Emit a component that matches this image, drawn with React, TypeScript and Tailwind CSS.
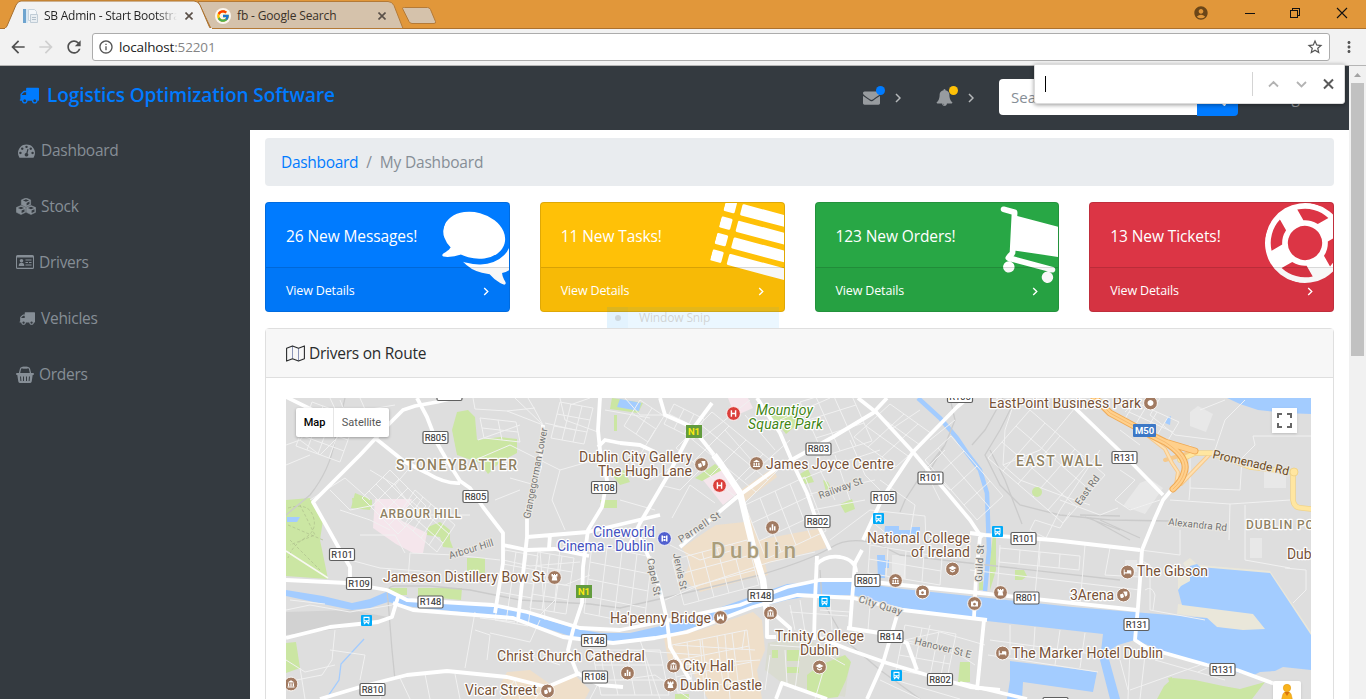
import React from "react";
import { FaSignOutAlt, FaSearch } from "react-icons/fa";
import { MdAccountCircle, MdStarBorder, MdMoreVert, MdArrowBack, MdArrowForward, MdRefresh, MdInfoOutline } from "react-icons/md";
import { FcGoogle } from "react-icons/fc";

const glyphs = {
  truck:
    "M640 1408q0-52-38-90t-90-38-90 38-38 90 38 90 90 38 90-38 38-90zm-384-512h384v-256h-158q-13 0-22 9l-195 195q-9 9-9 22v30zm1280 512q0-52-38-90t-90-38-90 38-38 90 38 90 90 38 90-38 38-90zm256-1088v1024q0 15-4 26.5t-13.5 18.5-16.5 11.5-23.5 6-22.5 2-25.5 0-22.5-.5q0 106-75 181t-181 75-181-75-75-181h-384q0 106-75 181t-181 75-181-75-75-181h-64q-3 0-22.5.5t-25.5 0-22.5-2-23.5-6-16.5-11.5-13.5-18.5-4-26.5q0-26 19-45t45-19v-320q0-8-.5-35t0-38 2.5-34.5 6.5-37 14-30.5 22.5-30l198-198q19-19 50.5-32t58.5-13h160v-192q0-26 19-45t45-19h1024q26 0 45 19t19 45z",
  comments:
    "M1408 768q0 139-94 257t-256.5 186.5-353.5 68.5q-86 0-176-16-124 88-278 128-36 9-86 16h-3q-11 0-20.5-8t-11.5-21q-1-3-1-6.5t.5-6.5 2-6l2.5-5 3.5-5.5 4-5 4.5-5 4-4.5q5-6 23-25t26-29.5 22.5-29 25-38.5 20.5-44q-124-72-195-177t-71-224q0-139 94-257t256.5-186.5 353.5-68.5 353.5 68.5 256.5 186.5 94 257zm384 256q0 120-71 224.5t-195 176.5q10 24 20.5 44t25 38.5 22.5 29 26 29.5 23 25q1 1 4 4.5t4.5 5 4 5 3.5 5.5l2.5 5 2 6 .5 6.5-1 6.5q-3 14-13 22t-22 7q-50-7-86-16-154-40-278-128-90 16-176 16-271 0-472-132 58 4 88 4 161 0 309-45t264-129q125-92 192-212t67-254q0-77-23-152 129 71 204 178t75 230z",
  list:
    "M32 128h192q32 0 32 32v192q0 32-32 32h-192q-32 0-32-32v-192q0-32 32-32zM416 128h1344q32 0 32 32v192q0 32-32 32h-1344q-32 0-32-32v-192q0-32 32-32zM32 512h192q32 0 32 32v192q0 32-32 32h-192q-32 0-32-32v-192q0-32 32-32zM416 512h1344q32 0 32 32v192q0 32-32 32h-1344q-32 0-32-32v-192q0-32 32-32zM32 896h192q32 0 32 32v192q0 32-32 32h-192q-32 0-32-32v-192q0-32 32-32zM416 896h1344q32 0 32 32v192q0 32-32 32h-1344q-32 0-32-32v-192q0-32 32-32zM32 1280h192q32 0 32 32v192q0 32-32 32h-192q-32 0-32-32v-192q0-32 32-32zM416 1280h1344q32 0 32 32v192q0 32-32 32h-1344q-32 0-32-32v-192q0-32 32-32z",
  cart:
    "M704 1536q0 52-38 90t-90 38-90-38-38-90 38-90 90-38 90 38 38 90zm896 0q0 52-38 90t-90 38-90-38-38-90 38-90 90-38 90 38 38 90zm128-1088v512q0 24-16.5 42.5t-40.5 21.5l-1044 122q13 60 13 70 0 16-24 64h920q26 0 45 19t19 45-19 45-45 19h-1024q-26 0-45-19t-19-45q0-11 8-31.5t16-36 21.5-40 15.5-29.5l-177-823h-204q-26 0-45-19t-19-45 19-45 45-19h256q16 0 28.5 6.5t19.5 15.5 13 24.5 8 26 5.5 29.5 4.5 26h1201q26 0 45 19t19 45z",
  ring:
    "M896 0q182 0 348 71t286 191 191 286 71 348-71 348-191 286-286 191-348 71-348-71-286-191-191-286-71-348 71-348 191-286 286-191 348-71zm0 128q-190 0-361 90l194 194q82-28 167-28t167 28l194-194q-171-90-361-90zm-678 1129l194-194q-28-82-28-167t28-167l-194-194q-90 171-90 361t90 361zm678 407q190 0 361-90l-194-194q-82 28-167 28t-167-28l-194 194q171 90 361 90zm0-384q159 0 271.5-112.5t112.5-271.5-112.5-271.5-271.5-112.5-271.5 112.5-112.5 271.5 112.5 271.5 271.5 112.5zm484-217l194 194q90-171 90-361t-90-361l-194 194q28 82 28 167t-28 167z",
  bell:
    "M912 1696q0-16-16-16-59 0-101.5-42.5t-42.5-101.5q0-16-16-16t-16 16q0 73 51.5 124.5t124.5 51.5q16 0 16-16zm816-288q0 52-38 90t-90 38h-448q0 106-75 181t-181 75-181-75-75-181h-448q-52 0-90-38t-38-90q50-42 91-88t85-119.5 74.5-158.5 50-206 19.5-260q0-152 117-282.5t307-158.5q-8-19-8-39 0-40 28-68t68-28 68 28 28 68q0 20-8 39 190 28 307 158.5t117 282.5q0 139 19.5 260t50 206 74.5 158.5 85 119.5 91 88z",
  envelope:
    "M1792 710v794q0 66-47 113t-113 47h-1472q-66 0-113-47t-47-113v-794q44 49 101 87 362 246 497 345 57 42 92.5 65.5t94.5 48 110 24.5h2q51 0 110-24.5t94.5-48 92.5-65.5q170-123 498-345 57-39 100-87zm0-294q0 79-49 151t-122 123q-376 261-468 325-10 7-42.5 31t-54 38.5-52 32.5-57.5 27-50 9h-2q-23 0-50-9t-57.5-27-52-32.5-54-38.5-42.500-31q-91-64-262-182.500t-205-142.500q-62-42-117-115.500t-55-136.500q0-78 41.500-130t118.500-52h1472q65 0 112.500 47t47.500 113z",
  gauge:
    "M384 1152q0-53-37.5-90.5t-90.5-37.5-90.5 37.5-37.5 90.5 37.5 90.5 90.5 37.5 90.5-37.5 37.5-90.5zm192-448q0-53-37.5-90.5t-90.5-37.5-90.5 37.5-37.5 90.5 37.5 90.5 90.5 37.5 90.5-37.5 37.5-90.5zm428 481l101-382q6-26-7.5-48.5t-38.5-29.5-48 6.5-30 39.5l-101 382q-60 5-107 43.5t-63 98.5q-20 77 20 146t117 89 146-20 89-117q16-60-6-117t-72-91zm660-33q0-53-37.5-90.5t-90.5-37.5-90.5 37.5-37.5 90.5 37.5 90.5 90.5 37.5 90.5-37.5 37.5-90.5zm-640-640q0-53-37.5-90.5t-90.5-37.5-90.5 37.5-37.5 90.5 37.5 90.5 90.5 37.5 90.5-37.5 37.5-90.5zm448 192q0-53-37.5-90.5t-90.5-37.5-90.5 37.5-37.5 90.5 37.5 90.5 90.5 37.5 90.5-37.5 37.5-90.5zm320 448q0 261-141 483-19 29-54 29h-1402q-35 0-54-29-141-221-141-483 0-182 71-348t191-286 286-191 348-71 348 71 286 191 191 286 71 348z",
};

function Glyph({ name, className }: { name: keyof typeof glyphs; className: string }) {
  return (
    <svg viewBox="0 0 1792 1792" fill="currentColor" className={className}>
      <path d={glyphs[name]} />
    </svg>
  );
}

function Chevron({ className, d = "M1 1l4 4-4 4" }: { className: string; d?: string }) {
  return (
    <svg viewBox="0 0 6 10" fill="none" stroke="currentColor" strokeWidth="1.5" className={className}>
      <path d={d} />
    </svg>
  );
}

function IdCard({ className }: { className: string }) {
  return (
    <svg viewBox="0 0 18 14" className={className} fill="currentColor">
      <path fillRule="evenodd" d="M1.5 0h15Q18 0 18 1.5v11Q18 14 16.500 14h-15Q0 14 0 12.500v-11Q0 0 1.500 0zM1 2.500v10.200h16V2.500z" />
      <circle cx="5.500" cy="5.800" r="1.800" />
      <path d="M2.700 11q0-3.200 2.800-3.200T8.300 11zM9.500 4.600h6v1h-6zM9.500 7h2.500v1H9.500zM13 7h2.500v1H13zM9.500 9.400h6v1h-6z" />
    </svg>
  );
}

function Cubes({ className }: { className: string }) {
  const cube = "M0-4.200L4.600-2.300V2.500L0 4.700-4.600 2.500V-2.300z";
  const face = "M0-3L3.100-1.800 0-.5-3.100-1.800zM.6.700L3.500-.6V1.900L.6 3.300z";
  const spots: [number, number][] = [[10, 4.200], [5, 11.800], [15, 11.800]];
  return (
    <svg viewBox="0 0 20 17" className={className}>
      {spots.map(([x, y]) => (
        <g key={x} transform={`translate(${x} ${y})`}>
          <path d={cube} fill="currentColor" stroke="currentColor" strokeWidth=".6" strokeLinejoin="round" />
          <path d={face} fill="#343a40" />
        </g>
      ))}
    </svg>
  );
}

function Basket({ className }: { className: string }) {
  return (
    <svg viewBox="0 0 18 17" className={className}>
      <path d="M3.300 8L4.500 2.900Q4.800 1.700 6 1.700h6q1.200 0 1.500 1.200L14.700 8" fill="none" stroke="currentColor" strokeWidth="1.200" />
      <path d="M6.500.6h5v2h-5z" fill="currentColor" />
      <path
        fillRule="evenodd"
        d="M1 7h16q1 0 1 1t-1 1h-.3l-1 6.600q-.2 1.400-1.500 1.400H3.800q-1.300 0-1.500-1.400L1.300 9H1Q0 9 0 8t1-1zM4 10.500l.4 4.500h1l-.4-4.500zM7 10.500V15h1v-4.500zM10 10.500V15h1v-4.500zM13 10.500l-.4 4.500h1l.4-4.500z"
        fill="currentColor"
      />
    </svg>
  );
}

function FoldedMap({ className }: { className: string }) {
  return (
    <svg viewBox="0 0 19 17" className={className} fill="none" strokeLinejoin="round">
      <path d="M6.500 1v12.500M12.500 3.300v12.500" stroke="#8b95b8" strokeWidth="1" />
      <path d="M.6 3.300L6.500.9l6 2.400L18.400.9v12.800l-5.900 2.400-6-2.400-5.900 2.400z" stroke="#292b2c" strokeWidth="1.100" />
    </svg>
  );
}

/* ---------- browser chrome ---------- */

function TabClose() {
  return (
    <svg viewBox="0 0 8 8" className="h-2 w-2 shrink-0" stroke="#5a5048" strokeWidth="1.6">
      <path d="M.5.5l7 7M7.500.5l-7 7" />
    </svg>
  );
}

function TabStrip() {
  return (
    <div className="relative flex h-[29px] shrink-0 bg-[#e1973a]">
      <svg viewBox="0 0 1366 29" className="absolute inset-0 h-[29px] w-[1366px]">
        <path d="M0 28.500H1366" stroke="#ac712d" />
        <path d="M402.500 8q.5-.5 2-.500h23q2 0 3 2l5 12q.5 2-1.500 2h-22q-2 0-3-2l-6.500-13z" fill="#d5c2ab" stroke="#b47a37" />
        <path d="M198 1.500h190q4 0 6 4l9 23H211z" fill="#d5c2ab" stroke="#b47a37" />
        <path d="M4 29q2-1 3-3l9-21q2-4 5-4h173q4 0 6 4l9 21q1 3 3 3z" fill="#f2f2f2" stroke="#a8702f" />
        <path d="M5 28.600h207" stroke="#f2f2f2" strokeWidth="1.400" />
      </svg>
      <div className="relative flex w-[207px] items-center pr-[14px] pl-[23px] pt-[2px]">
        <svg viewBox="0 0 16 16" className="h-4 w-4 shrink-0">
          <path d="M0 1h3v14H0z" fill="#6ea4cf" />
          <path d="M3 1h2v14H3z" fill="#d9e8f3" />
          <path d="M5.500 1.500h6l2 2v9h-8z" fill="#f4f7fa" stroke="#c9d4dd" />
          <path d="M7.500 6.500h7v8h-7z" fill="#e9eef2" stroke="#c0ccd6" />
          <path d="M9 9.500h4M9 11.500h4" stroke="#b4c1cc" />
        </svg>
        <span className="ml-[5px] w-[133px] overflow-hidden bg-gradient-to-r from-[#222] from-85% to-transparent bg-clip-text font-['Open_Sans',sans-serif] text-[12px] tracking-[-0.25px] whitespace-nowrap text-transparent">
          SB Admin - Start Bootstrap
        </span>
        <span className="ml-auto"><TabClose /></span>
      </div>
      <div className="relative flex w-[193px] items-center pt-[2px] pr-[14px] pl-[8px]">
        <span className="flex h-4 w-4 items-center justify-center rounded-full bg-[#fbf6ef]">
          <FcGoogle className="h-[14px] w-[14px]" />
        </span>
        <span className="ml-[6px] font-['Open_Sans',sans-serif] text-[12px] tracking-[-0.150px] whitespace-nowrap text-[#3a3128]">fb - Google Search</span>
        <span className="ml-auto"><TabClose /></span>
      </div>
      <div className="relative ml-auto flex h-[26px] items-center pr-[18px]">
        <MdAccountCircle className="mr-[35px] h-4 w-4 text-[#6b4618]" />
        <svg viewBox="0 0 104 12" className="h-3 w-[104px]" fill="none" stroke="#111" shapeRendering="crispEdges">
          <path d="M1 6.500h10" />
          <path d="M46.500 3.500h7v7h-7zM48.500 3v-1.500h7v7H54" />
          <path d="M93 1l10 10M103 1L93 11" shapeRendering="auto" strokeWidth="1.100" />
        </svg>
      </div>
    </div>
  );
}

function Toolbar() {
  return (
    <div className="flex h-[37px] shrink-0 items-center border-b border-[#b5b5b5] bg-[#f2f2f2] pl-2">
      <MdArrowBack className="h-5 w-5 text-[#505050]" />
      <MdArrowForward className="ml-[8px] h-5 w-5 text-[#cfcfcf]" />
      <MdRefresh className="ml-[8px] h-5 w-5 text-[#505050]" />
      <div className="ml-[8px] flex h-7 w-[1238px] items-center rounded-[3px] border border-[#acacac] bg-white px-[5px]">
        <MdInfoOutline className="h-4 w-4 text-[#555]" />
        <span className="ml-[5px] font-['Open_Sans',sans-serif] text-[13.5px] tracking-[-0.150px] text-[#222]">
          localhost<span className="text-[#858585]">:52201</span>
        </span>
        <MdStarBorder className="ml-auto h-[18px] w-[18px] text-[#555]" />
      </div>
      <MdMoreVert className="ml-[10px] h-[18px] w-[18px] text-[#555]" />
    </div>
  );
}

function FindBar() {
  return (
    <div className="absolute top-[64px] left-[1034px] flex h-[40px] w-[311px] items-center rounded-b-[3px] border border-[#dcdcdc] bg-white shadow-[0_1px_4px_rgba(0,0,0,0.4)]">
      <span className="-mt-px ml-[10px] h-4 w-px bg-black" />
      <span className="ml-auto h-6 w-px bg-[#d4d4d4]" />
      <svg viewBox="0 0 72 12" className="mr-[5px] ml-[14px] h-3 w-[72px]" fill="none" strokeWidth="1.800">
        <path d="M2 8.500l4.500-4.500L11 8.500M30 4l4.500 4.500L39 4" stroke="#b3b3b3" />
        <path d="M57 1.500l9 9M66 1.500l-9 9" stroke="#5a5a5a" strokeWidth="2" />
      </svg>
    </div>
  );
}

/* ---------- application ---------- */

function Navbar() {
  return (
    <header className="flex h-16 shrink-0 bg-[#343a40] font-['Open_Sans',sans-serif]">
      <div className="flex h-[58px] items-center pl-[19px] text-[#007bff]">
        <Glyph name="truck" className="h-5 w-5" />
        <span className="ml-2 text-[19px] font-semibold tracking-[-0.070px]">Logistics Optimization Software</span>
      </div>
      <div className="ml-auto flex h-[63px] items-center text-[#979b9f]">
        <span className="relative">
          <Glyph name="envelope" className="h-[17px] w-[17px]" />
          <span className="absolute -top-[3px] left-[13px] h-[9px] w-[9px] rounded-full bg-[#007bff]" />
        </span>
        <Chevron className="ml-[15px] h-[10px] w-[6px] text-[#b5b8ba]" />
        <span className="relative ml-[35px]">
          <Glyph name="bell" className="h-[17px] w-[17px]" />
          <span className="absolute -top-[3px] left-[13px] h-[9px] w-[9px] rounded-full bg-[#ffc107]" />
        </span>
        <Chevron className="ml-[15px] h-[10px] w-[6px] text-[#b5b8ba]" />
        <div className="ml-[25px] flex h-[37px]">
          <div className="flex h-[36px] w-[198px] items-center rounded-l bg-white pt-px pl-3 text-[15px] text-[#868e96]">Search for...</div>
          <div className="flex h-[37px] w-[41px] items-center justify-center rounded-r bg-[#007bff] text-white">
            <FaSearch className="h-4 w-4" />
          </div>
        </div>
        <div className="flex w-[111px] items-center pl-[22px] text-[15.500px]">
          <FaSignOutAlt className="h-3 w-3" />
          <span className="ml-[2px]">Logout</span>
        </div>
      </div>
    </header>
  );
}

function SideItem({ icon, label, className }: { icon: React.ReactNode; label: string; className: string }) {
  return (
    <div className={"flex h-14 items-center text-[15.500px] tracking-[-0.280px] text-[#868e96] " + className}>
      {icon}
      <span className="pt-[2px]">{label}</span>
    </div>
  );
}

function Sidebar() {
  return (
    <nav className="w-[250px] shrink-0 bg-[#343a40] font-['Open_Sans',sans-serif]">
      <div className="-mt-[8px]">
        <SideItem className="gap-[6px] pl-[18px]" label="Dashboard" icon={<Glyph name="gauge" className="h-[17px] w-[17px]" />} />
        <SideItem className="gap-[5px] pl-[16px]" label="Stock" icon={<Cubes className="h-[17px] w-5" />} />
        <SideItem className="gap-[5px] pl-[16px]" label="Drivers" icon={<IdCard className="h-[14px] w-[18px]" />} />
        <SideItem className="gap-[6px] pl-[19px]" label="Vehicles" icon={<Glyph name="truck" className="h-4 w-4" />} />
        <SideItem className="gap-[5px] pl-[16px]" label="Orders" icon={<Basket className="h-[17px] w-[18px]" />} />
      </div>
    </nav>
  );
}

function StatCard({ title, icon, className }: { title: string; icon: keyof typeof glyphs; className: string }) {
  return (
    <div className={"relative flex h-[110px] flex-col overflow-hidden rounded border border-black/[0.125] text-white " + className}>
      <Glyph name={icon} className="absolute top-0 right-[-12px] h-20 w-20 rotate-[15deg]" />
      <div className="flex h-[64px] items-center pt-[3px] pl-5 text-[15.500px] tracking-[-0.1px]">
        <span className="relative">{title}</span>
      </div>
      <div className="relative flex flex-1 items-center justify-between border-t border-black/[0.125] bg-black/[0.03] pt-[3px] pr-[20px] pl-5 text-[12.500px]">
        <span className="tracking-[-0.150px]">View Details</span>
        <Chevron className="h-[9px] w-[6px]" />
      </div>
    </div>
  );
}

/* ---------- map ---------- */

type Pt = [number, number];

function Lattice({ o, u, v, n, m, w = 1 }: { o: Pt; u: Pt; v: Pt; n: number; m: number; w?: number }) {
  let d = "";
  for (let i = 0; i <= n; i++) {
    d += `M${o[0] + u[0] * i} ${o[1] + u[1] * i}l${v[0] * m} ${v[1] * m}`;
  }
  for (let j = 0; j <= m; j++) {
    d += `M${o[0] + v[0] * j} ${o[1] + v[1] * j}l${u[0] * n} ${u[1] * n}`;
  }
  return <path d={d} strokeWidth={w} />;
}

const majorRoads = [
  "M417 398L427 417L437 443L448 462L460 481L470 488L483 507L503 533L503 563L495 613",
  "M454 398L437 402L415 406L403 410L390 423L360 455L313 502L340 550L350 567L350 580",
  "M286 397L327 417M375 438L405 462L427 473Q445 484 460 483",
  "M660 398L665 415L692 427L714 455",
  "M712 403L692 430L667 477L640 523L626 552",
  "M620 443L640 445L655 452M598 447L605 440L620 443",
  "M600 398L598 430L600 450L607 480L602 507L588 530L583 567L582 603L573 630L568 650L577 673L600 685L623 687",
  "M680 547L712 518L737 497L777 468L833 437L873 413L887 398",
  "M757 398L768 415L780 433L795 468L807 493L818 525L830 550",
  "M858 398L877 413L913 452L970 520L982 538",
  "M968 398L957 407L913 452L883 497L863 540",
  "M286 580L347 583L387 590L407 600L493 605L527 612L580 628L620 630L670 620L740 605L787 587L820 580L853 580L970 592L1137 610",
  "M393 603L413 610L513 618L563 637L613 643L655 638L687 632L753 607L797 595L853 598L903 610L987 620",
  "M398 597L392 617L378 622L330 627L286 638",
  "M320 699L360 687L407 675L447 671L507 677L547 687L580 673",
  "M817 556L815 600L814 640",
  "M862 550L855 563L852 600L850 628M816 565Q825 555 840 557Q856 560 856 572",
  "M1075 408L1127 458L1163 495",
  "M1173 488L1163 500L1155 518L1142 550L1140 580L1138 607L1135 640L1147 648L1207 665L1237 670L1275 684",
  "M985 535L1053 540L1140 550M970 533L985 535",
  "M980 537L976 577L974 617",
  "M984 620L977 690M960 683L1027 699",
  "M820 638L850 650L887 663L927 675L970 687L1000 690",
  "M898 612L883 663L867 699",
  "M767 612L767 637L776 637M773 613L790 628L790 632",
  "M847 628L880 633L907 643L917 670",
  "M776 699L782 683L827 699",
  "M503 545L527 550L555 549L589 556M527 537L588 532L660 515M550 535L549 548",
  "M543 425L540 467L527 510L527 537L518 620",
  "M640 538L650 560L660 590L667 620L670 647L690 680",
];

const minorRoads = [
  "M473 398L475 409L507 411L543 425L515 398M528 398L535 410L543 425M545 423L575 430M507 411L535 408",
  "M286 465L310 455M330 398L345 430L320 455L300 440M286 445L300 440L315 420M340 400L350 425M360 398L372 425M365 410L395 405",
  "M310 500L345 478L370 500M330 490L350 510L375 505M370 470L395 485L405 498L420 515L470 515M395 485L412 465",
  "M475 460L510 445L560 470L595 460M560 470L552 500L565 530M510 478L535 485M495 500L520 490M478 440L520 425M560 398L565 420L598 432M570 405L590 398",
  "M340 510L370 520L390 530M350 560L380 568L435 572M410 553L455 555L500 560M410 553L408 580M360 535L395 535L405 553",
  "M286 610L310 605L350 612L392 605M290 600L325 604",
  "M335 630L332 660L322 675L286 682M286 660L305 672L335 665M300 668L305 699M330 650L365 655L360 680",
  "M475 612L465 668M490 633L530 642L540 620M475 630L490 635L487 660M480 618L515 622",
  "M503 560L530 566L580 562M530 580L565 585L590 575M540 550L545 620M560 548L555 600L540 615",
  "M610 470L650 480L670 468M620 500L655 510M625 398L640 415L665 415M605 410L650 418M640 455L655 430",
  "M700 470L680 490L660 485M715 503L690 485L672 518M670 545L700 560L740 548M665 600L700 585L770 562L815 552",
  "M780 420L830 398M790 440L745 480M750 400L700 440M725 430L760 470M745 415L775 450M800 480L850 460L880 450M805 495L875 480M812 510L865 500M850 440L865 475L880 490",
  "M820 470L835 500M835 455L850 500M830 540L870 510L925 516L926 540M870 520L900 545",
  "M890 430L920 410M900 440L950 490M930 440L955 420M940 500L925 470L945 450M880 480L915 505L910 535",
  "M770 645L815 648L845 665M785 650L787 683M800 650L795 690M770 655L765 690M825 665L815 699",
  "M790 605L795 630M800 600L805 632M820 610L850 612M830 600L832 630M870 605L868 630M790 612L848 616",
  "M895 640L960 655L975 665M905 640L940 632L985 645M930 625L925 645M945 655L940 680M895 680L960 699M880 680L920 699",
  "M970 570L1140 590M1000 545L997 600M1040 540L1035 595M1085 545L1080 605M1110 548L1105 575L1140 577",
  "M1015 400L1005 430L1003 465L1020 480L1060 495L1090 505M1075 408L1040 450L1003 465M1100 450L1060 510L1045 540M1060 500L1100 515L1118 508",
  "M1035 520L1060 528L1070 512M1035 520L1030 530L1050 540M1120 470L1135 480L1115 500L1130 510L1160 500",
  "M1215 450L1225 420L1245 400M1190 445L1190 488L1240 490L1242 458L1255 445L1253 436L1311 436M1170 500L1230 504L1290 500M1230 504L1229 540M1190 488L1189 500",
  "M1120 430L1140 445M1140 398L1125 412M1160 398L1150 415L1175 435L1215 440M1200 410L1225 400",
  "M1140 560L1150 565L1150 610L1205 620M1145 590Q1152 585 1155 595L1153 610M1285 568L1306 570L1306 590L1293 603M1180 530L1180 555L1140 550M1245 505L1245 560L1290 568",
  "M990 640L1100 655M1010 625L1010 655M1035 627L1033 660M1060 630L1055 665M1085 633L1080 668M988 655L1098 672",
  "M1130 650L1128 699M1145 655L1140 699M1130 690L1200 665M1120 660L1128 690M1155 660L1225 680M1207 668L1198 672",
  "M630 650L700 655M640 640L660 699M620 680L655 675M675 645L755 650M700 640L705 699M725 635L730 699M745 630L742 650M600 650L605 680M590 699L600 680M680 665L760 660M655 675L690 699",
  "M500 699L515 680L520 699M410 699L400 678M380 699L385 684M430 699L425 674M460 699L455 674M545 687L535 699M560 665L530 655L500 655",
];

const railways = [
  "M286 515L310 495Q330 470 335 440L345 398",
  "M395 680L392 650L388 600Q385 586 395 586L430 586L470 590L520 600L590 604L620 608Q700 590 760 575Q810 560 830 548Q850 535 880 545L900 555L960 562L1120 580",
  "M820 570L822 600L845 640L880 670L920 699",
  "M1003 398L985 430L972 445M1015 400L1000 430L985 455L1000 485L1020 505L1060 515L1110 520L1170 521",
  "M990 450L1005 480L1022 524M1090 518L1130 540M1085 517L1120 530M1080 515L1120 516M1100 520L1140 538",
  "M950 398L955 420L945 445L918 480L905 500L900 512M945 445L930 470",
];

const parks = [
  "M286 500L310 498L323 520L320 540L328 579L286 576z",
  "M457 412L468 410L475 417L477 440L500 437L517 439L517 453L500 462L488 474L480 463L457 455L452 430z",
  "M355 493L372 500L370 510L351 508z",
  "M428 527L440 522L450 530L450 540L453 548L443 547L440 537L427 535z",
  "M467 558h18v15h-18zM387 588h20v7h-17zM418 588h44l-1 12-43-4z",
  "M286 643L296 642L300 668L286 673z",
  "M352 498L372 500L372 508L353 506z",
  "M612 398L643 403L638 413L610 409z",
  "M771 416L795 412L800 422L786 434L778 424z",
  "M695 478L715 464L722 470L702 481z",
  "M800 474L808 469L814 482L805 484zM823 480L828 482L833 492L826 492zM840 504L852 499L855 509L845 513z",
  "M807 675L820 665L845 655L851 662L846 680L838 697L820 699L807 690z",
  "M772 650h6v8h-6zM787 650h13v11h-13zM787 667h12v6h-12z",
  "M1157 699L1164 686L1173 678L1195 680L1223 686L1240 689L1265 682L1252 699z",
  "M1168 678L1172 677L1176 690L1172 692z",
  "M1015 570h9l3 6-5 4h-7zM979 560h4v30h-4zM993 535h3v35l-6 20v-30zM960 662h10v20h-12z",
  "M600 500h17v8h-15zM612 475l12-5 6 12-10 3zM675 694h14v5h-14zM614 415h3v16h-3z",
];

const peach = [
  "M738 492L773 468L777 477L744 502L752 522L758 540L822 528L826 548L765 564L768 575L752 578L700 592L683 580L690 562L682 548L708 530L716 525L745 522z",
  "M664 638L700 630L753 612L762 620L765 650L757 670L762 699L708 699L690 668L668 660z",
  "M507 672L530 670L550 684L575 675L590 690L585 699L505 699L500 685z",
];

function Shield({ x, y, label }: { x: number; y: number; label: string }) {
  const w = label.length > 3 ? 25 : 20;
  return (
    <g>
      <rect x={x - w / 2} y={y - 6} width={w} height={12} rx="1.500" fill="#fff" stroke="#5f5f5f" strokeWidth="1.200" />
      <text x={x} y={y + 3.400} textAnchor="middle" fontSize="9.300" fill="#333" stroke="#333" strokeWidth=".1">{label}</text>
    </g>
  );
}

const shields: [number, number, string][] = [
  [449.500, 394.500, "R101"], [435.500, 437.500, "R805"], [475.500, 496.500, "R805"], [604, 487.500, "R108"], [342, 554.500, "R101"], [359, 583.500, "R109"],
  [430.500, 602, "R148"], [594, 640.500, "R148"], [595, 677, "R108"], [372.500, 689.500, "R810"], [818.500, 449, "R803"], [930.500, 478, "R101"],
  [883.500, 497.500, "R105"], [817.500, 521.500, "R802"], [760.500, 595.500, "R148"], [867.500, 580.500, "R801"], [890.500, 636.500, "R814"], [940, 679.500, "R802"],
  [1124.500, 457.500, "R131"], [1023.500, 538.500, "R101"], [1026.500, 598, "R801"], [1136.500, 624.500, "R131"], [1222.500, 669.500, "R131"], [1055.500, 703.500, "R802"], [960, 396.500, "R105"],
];

type Tag = { x: number; y: number; w: number; t: string; s?: number; c?: string; r?: number; weight?: number; i?: boolean };

const tags: Tag[] = [
  { x: 396, y: 470, w: 121, t: "STONEYBATTER", s: 14, c: "#8f7f5f", weight: 500 },
  { x: 380, y: 518, w: 81, t: "ARBOUR HILL", s: 12, c: "#8f8163", weight: 500 },
  { x: 1016, y: 466, w: 86, t: "EAST WALL", s: 14, c: "#8f8163", weight: 500 },
  { x: 1246, y: 529, w: 84, t: "DUBLIN PORT", s: 12, c: "#8f8163", weight: 500 },
  { x: 711, y: 558, w: 85, t: "Dublin", s: 22, c: "#aa9d7b", weight: 500 },
  { x: 579, y: 462, w: 113, t: "Dublin City Gallery" },
  { x: 598, y: 476, w: 94, t: "The Hugh Lane" },
  { x: 766, y: 469, w: 128, t: "James Joyce Centre" },
  { x: 756, y: 415, w: 57, t: "Mountjoy", c: "#3f8614", i: true },
  { x: 748, y: 429, w: 75, t: "Square Park", c: "#3f8614", i: true },
  { x: 593, y: 537, w: 62, t: "Cineworld", c: "#4552c0" },
  { x: 557, y: 551, w: 97, t: "Cinema - Dublin", c: "#4552c0" },
  { x: 383, y: 582, w: 162, t: "Jameson Distillery Bow St" },
  { x: 610, y: 623, w: 101, t: "Ha'penny Bridge" },
  { x: 497, y: 661, w: 148, t: "Christ Church Cathedral" },
  { x: 465, y: 695, w: 72, t: "Vicar Street" },
  { x: 683, y: 671, w: 51, t: "City Hall" },
  { x: 680, y: 690, w: 82, t: "Dublin Castle" },
  { x: 775, y: 641, w: 89, t: "Trinity College" },
  { x: 800, y: 655, w: 39, t: "Dublin" },
  { x: 867, y: 543, w: 103, t: "National College" },
  { x: 911, y: 557, w: 59, t: "of Ireland" },
  { x: 989, y: 408, w: 152, t: "EastPoint Business Park" },
  { x: 1137, y: 576, w: 71, t: "The Gibson" },
  { x: 1070, y: 600, w: 44, t: "3Arena" },
  { x: 1012, y: 658, w: 151, t: "The Marker Hotel Dublin" },
  { x: 1287, y: 559, w: 39, t: "Dublin" },
  { x: 450, y: 559, w: 46, t: "Arbour Hill", s: 10, c: "#747474", r: -17 },
  { x: 681, y: 543, w: 48, t: "Parnell St", s: 10, c: "#747474", r: -33 },
  { x: 820, y: 499, w: 46, t: "Railway St", s: 10, c: "#747474", r: -20 },
  { x: 647, y: 559, w: 38, t: "Capel St", s: 10, c: "#747474", r: 79 },
  { x: 673, y: 554, w: 37, t: "Jervis St", s: 10, c: "#747474", r: 78 },
  { x: 858, y: 602, w: 45, t: "City Quay", s: 10, c: "#747474", r: 17 },
  { x: 914, y: 644, w: 58, t: "Hanover St E", s: 10, c: "#747474", r: 14 },
  { x: 1168, y: 525, w: 59, t: "Alexandra Rd", s: 10, c: "#747474", r: 6 },
  { x: 1080, y: 506, w: 34, t: "East Rd", s: 10, c: "#747474", r: -54 },
  { x: 982, y: 582, w: 37, t: "Guild St", s: 10, c: "#747474", r: -87 },
  { x: 530, y: 519, w: 92, t: "Grangegorman Lower", s: 10, c: "#747474", r: -79 },
  { x: 1212, y: 458, w: 78, t: "Promenade Rd", s: 12, c: "#6b4a1d", r: 13 },
];

/* Small white pictograms drawn inside the round place markers. */
const pictos = {
  museum: "M-3.500-1.500L0-3.800 3.500-1.500zM-3-.8h1.300v3H-3zM-.6-.8H.6v3H-.6zM1.700-.8H3v3H1.700zM-3.500 2.500h7v1h-7z",
  tower: "M-3-3.500h1.500v1h1v-1h1v1h1v-1H3v2.500H2l.8 4h-5.600l.8-4H-3z",
  school: "M0-3.200L4-1 0 1.200-4-1zM-2.500.8L0 2.200 2.500.8v1.500L0 3.500-2.500 2.300z",
  camera: "M-3.500-2h2l.8-1h2l.8 1h1.400v5h-7zM0-.8a1.400 1.400 0 1 0 .01 0z",
  bed: "M-3.800-2.500h1v2.800H-.5v-2h3.300q1 0 1 1v3.300h-1V1.500h-5.600v1.200h-1z",
  theatre: "M-3.500-.5l3-1 1 3q-1.500 2.500-3.500 1zM0-3.500h3.800V0q-1 2-2.300 1.300L.6-1.700 0-2.200z",
  bars: "M-3 0h1.500v3H-3zM-.8-3.200H.8V3H-.8zM1.500-1.200H3V3H1.500z",
  bridge: "M-3.500-3h1.200v2h1.600v-2H.7v2h1.600v-2h1.200v6H2.300Q0-1-2.300 3h-1.200z",
  hospital: "M-2.800-3.300h1.400v2.600h2.800v-2.600h1.400v6.600H1.400V.7h-2.800v2.600h-1.400z",
  film: "M-3-3h1.500v6H-3zM1.500-3H3v6H1.500zM-1-2.500H1v2H-1zM-1 .5H1v2H-1z",
  dot: "M0-3a3 3 0 1 0 .01 0z",
};

const markers: [number, number, keyof typeof pictos, string?][] = [
  [701.500, 464.500, "theatre"], [756.500, 463.500, "museum"], [772.500, 527.500, "bars"], [770.500, 613, "museum"], [720.500, 617.500, "bridge"],
  [673.500, 666, "museum"], [670.500, 685, "tower"], [627.500, 673, "bars"], [819.500, 667, "school"], [895.500, 580.500, "museum"],
  [922.500, 592, "camera"], [974.500, 603.500, "camera"], [1000.500, 592.500, "tower"], [952.500, 569, "school"], [1127.500, 572, "bed"],
  [1123.500, 595, "theatre"], [1002.500, 653, "bed"], [1150.500, 403, "dot"], [554.500, 577.500, "tower"], [547.500, 691, "theatre"],
  [291, 684, "museum"], [733.500, 413.500, "hospital", "#db3f3b"], [719.500, 485.500, "hospital", "#db3f3b"], [664.500, 538.500, "film", "#5160cf"],
];

const stations: Pt[] = [[366.500, 620.500], [878.500, 518.500], [824.500, 601.500], [997.500, 531.500], [896.500, 675.500]];

function DublinMap() {
  return (
    <svg viewBox="286 398 1025 301" className="h-[301px] w-[1025px]" fontFamily="Roboto, sans-serif">
      <path d="M286 398h1025v301H286z" fill="#dedede" />
      <g fill="#e8e8e8">
        <path d="M1190 412l8-6 15 8-7 18-16-6zM1140 483l10-4 13 9-18 26-22-8zM1264 470h22v18h-22zM1250 538h12v20h-12zM1125 560h12v12h-12zM892 555h14v24h-14z" />
      </g>
      <path d="M375 499L412 499L400 520L427 533L423 553L413 553L396 544L373 528zM703 480L720 468L738 493L723 505zM728 398h20l5 10-18 8z" fill="#f5e6ec" />
      <path d="M286 612l65-2 37 7-50 12-52 6z" fill="#d2d2d2" />
      <path d="M768 643L800 636L850 660L845 697L782 683L765 670z" fill="#dadcd1" />
      <g fill="#cbe6a3">{parks.map((d) => <path key={d} d={d} />)}</g>
      <g fill="#efdfca">{peach.map((d) => <path key={d} d={d} />)}</g>
      <path d="M1183 563L1190 558L1198 565L1270 571L1311 632L1311 640L1268 578L1190 575zM1178 604L1253 610L1266 630L1243 632L1217 627L1207 618L1177 614zM1178 572h12v18h-12z" fill="#eae7da" />
      <g fill="#a3ccff">
        <path d="M286 590L323 596L352 603L370 599L386 592L413 599L480 605L520 611L573 628L600 633L630 633L665 625L713 610L753 596L787 584L820 582L853 582L903 589L970 596L1073 607L1133 612L1207 618L1217 627L1243 630L1265 629L1253 614L1182 605L1178 590L1181 586L1190 581L1190 566L1197 564L1200 567L1270 573L1311 635V670L1283 667L1275 671L1260 672L1252 676L1207 665L1160 650L1135 640L1118 645L1107 652L1120 699H1110L1100 660L1103 634L960 618L903 608L853 595L810 596L787 600L753 609L713 622L665 636L630 642L600 641L573 637L520 620L480 614L413 607L388 602L370 608L352 610L323 604L286 596z" />
        <path d="M1010 661L1060 667L1097 672L1093 692L1023 682L1022 699L1007 699L1010 680z" />
        <path d="M1227 398L1240 404L1258 410L1285 413L1311 414V398z" />
        <path d="M620 399L641 403L639 411L617 407zM885 526h14v4h12v-3h9v8l-22 0v5h-9v-6h-5zM877 555h8v5h4v8h-4v10h-7zM1167 418l4-2-1 9-5-2zM287 517h13l-3 5h-10z" />
      </g>
      <g fill="none" stroke="#a3ccff">
        <path d="M918 398L940 418L957 438L967 453L980 470L987 493L989 550L985 591" strokeWidth="4.500" />
        <path d="M364 639L341 664L339 680L326 699" strokeWidth="1.300" />
      </g>
      <g fill="none" stroke="#aebf8d" strokeWidth=".7" strokeDasharray="3 2">
        <path d="M288 508q20-6 25 8t-8 22-17 20M290 540l30 30M300 505l15 30-25 10M288 525l35 15" />
      </g>
      <path d="M286 551L328 578" stroke="#f8f8f2" strokeWidth="1.500" />
      <g fill="none" stroke="#cbcbcb" strokeWidth="1.300">{railways.map((d) => <path key={d} d={d} />)}</g>
      <g fill="none" stroke="#f1f1f1" strokeWidth="1" strokeLinejoin="round">
        {minorRoads.map((d) => <path key={d} d={d} />)}
        <Lattice o={[390, 470]} u={[9, 9]} v={[-7, 7]} n={4} m={4} />
        <Lattice o={[415, 490]} u={[8, 7]} v={[-6, 9]} n={5} m={3} />
        <Lattice o={[312, 402]} u={[11, 4]} v={[-4, 11]} n={4} m={4} />
        <Lattice o={[505, 550]} u={[11, 2]} v={[-2, 14]} n={3} m={5} />
        <Lattice o={[538, 552]} u={[12, 2]} v={[-2, 14]} n={3} m={4} />
        <Lattice o={[640, 400]} u={[12, 8]} v={[-8, 13]} n={2} m={2} />
        <Lattice o={[674, 404]} u={[10, 5]} v={[-5, 10]} n={3} m={2} />
        <Lattice o={[712, 412]} u={[17, 14]} v={[-12, 12]} n={4} m={3} />
        <Lattice o={[800, 402]} u={[16, -5]} v={[8, 18]} n={3} m={3} />
        <Lattice o={[890, 404]} u={[14, 10]} v={[-12, 11]} n={3} m={3} />
        <Lattice o={[925, 460]} u={[13, -12]} v={[13, 15]} n={2} m={4} />
        <Lattice o={[1030, 410]} u={[15, 13]} v={[-14, 16]} n={5} m={3} />
        <Lattice o={[745, 505]} u={[15, -7]} v={[7, 18]} n={4} m={3} />
        <Lattice o={[672, 560]} u={[15, -4]} v={[4, 15]} n={5} m={3} />
        <Lattice o={[592, 545]} u={[15, 3]} v={[-2, 17]} n={4} m={4} />
        <Lattice o={[592, 650]} u={[17, 0]} v={[3, 15]} n={4} m={3} />
        <Lattice o={[672, 645]} u={[15, -3]} v={[2, 16]} n={5} m={3} />
        <Lattice o={[870, 545]} u={[18, 3]} v={[-1, 14]} n={4} m={2} />
        <Lattice o={[905, 625]} u={[17, 3]} v={[-3, 15]} n={3} m={3} />
        <Lattice o={[1000, 548]} u={[20, 2]} v={[-1, 14]} n={4} m={1} />
        <Lattice o={[560, 402]} u={[11, 2]} v={[-3, 12]} n={3} m={3} />
        <Lattice o={[480, 418]} u={[18, 2]} v={[2, 10]} n={2} m={2} />
        <Lattice o={[1135, 402]} u={[11, 5]} v={[-6, 10]} n={4} m={2} />
      </g>
      <g fill="none" stroke="#fff" strokeWidth="3.800" strokeLinejoin="round">{majorRoads.map((d) => <path key={d} d={d} />)}</g>
      <path d="M714 455L720 463L740 493L753 547L763 580L767 612" fill="none" stroke="#fff" strokeWidth="6.500" strokeLinejoin="round" />
      <circle cx="1037" cy="492" r="5" fill="#cbe6a3" />
      <g fill="none" strokeLinecap="round" strokeLinejoin="round">
        <path d="M1147 435L1165 449L1172 463L1178 472L1176 485M1165 460L1193 452M1209 455L1181 484" stroke="#f6c98b" strokeWidth="4" />
        <path d="M1147 435L1165 449L1172 463L1178 472L1176 485M1209 455L1181 484" stroke="#ffe0b0" strokeWidth="2" />
        <path d="M1180 460L1195 453L1212 453M1212 453L1250 467L1293 472L1293 500Q1294 508 1302 508L1312 509" stroke="#f1d48a" strokeWidth="5.500" />
        <path d="M1180 460L1195 453L1212 453M1212 453L1250 467L1293 472L1293 500Q1294 508 1302 508L1312 509" stroke="#ffe6a0" strokeWidth="4" />
        <path d="M1093 396L1110 413L1147 433L1165 442L1195 451M1165 442Q1190 458 1184 473Q1182 481 1173 489" stroke="#f0aa55" strokeWidth="7" />
        <path d="M1093 396L1110 413L1147 433L1165 442L1195 451M1165 442Q1190 458 1184 473Q1182 481 1173 489" stroke="#ffd08c" strokeWidth="5" />
        <path d="M1093 396L1110 413L1147 433L1165 442Q1190 458 1184 473Q1182 481 1173 489" stroke="#f4b569" strokeWidth=".8" />
      </g>
      <circle cx="1294" cy="472" r="4" fill="#ffe6a0" stroke="#f1d48a" />
      {shields.map(([x, y, l]) => <Shield key={l + x} x={x} y={y} label={l} />)}
      <g textAnchor="middle" fontSize="9.500" fontWeight="700">
        <path d="M686 425h16v13h-16zM576 585h16v13h-16z" fill="#639c3e" />
        <text x="694" y="435" fill="#f7e813">N1</text>
        <text x="584" y="594.500" fill="#f7e813">N1</text>
        <rect x="1133" y="424" width="23" height="13" rx="1" fill="#3c78c6" />
        <text x="1144.500" y="434" fill="#fff">M50</text>
      </g>
      {tags.map((t) => (
        <text
          key={t.t + t.x}
          x={t.x}
          y={t.y}
          textLength={t.w}
          fontSize={t.s ?? 14}
          fontStyle={t.i ? "italic" : "normal"}
          fontWeight={t.weight ?? 400}
          fill={t.c ?? "#775238"}
          stroke={t.r || t.s === 22 ? "#e9e7e2" : "#fff"}
          strokeWidth={t.s === 22 ? 1.5 : 2.4}
          strokeLinejoin="round"
          paintOrder="stroke"
          transform={t.r ? `rotate(${t.r} ${t.x} ${t.y})` : undefined}
        >
          {t.t}
        </text>
      ))}
      {markers.map(([x, y, p, c]) => (
        <g key={p + x + y} transform={`translate(${x} ${y})`}>
          <circle r="6.900" fill={c ?? "#a17a61"} stroke="#fff" strokeWidth=".9" />
          <path d={pictos[p]} fill="#fff" fillRule="evenodd" />
        </g>
      ))}
      {stations.map(([x, y]) => (
        <g key={"s" + x} transform={`translate(${x} ${y})`}>
          <rect x="-5.500" y="-5.500" width="11" height="11" rx="1" fill="#00aaf8" />
          <path fillRule="evenodd" d="M-3-3.800h6v6h-1l1 1.600H1.500l-.8-1.600h-1.400l-.8 1.600H-3l1-1.600h-1zM-2-2.500v2.300h4v-2.300zM-2 .5v1h1v-1zM1 .5v1h1v-1z" fill="#fff" />
        </g>
      ))}
    </svg>
  );
}

function MapPanel() {
  return (
    <div className="relative h-[301px] w-[1025px] overflow-hidden">
      <DublinMap />
      <div className="absolute top-[10px] left-[10px] flex h-[29px] rounded-[2px] bg-white font-[Roboto,sans-serif] text-[11px] leading-[29px] shadow-[0_1px_3px_rgba(0,0,0,0.3)]">
        <span className="w-[38px] border-r border-[#e6e6e6] text-center font-medium text-black">Map</span>
        <span className="w-[55px] text-center text-[#565656]">Satellite</span>
      </div>
      <div className="absolute top-[10px] right-[14px] flex h-[25px] w-[25px] items-center justify-center bg-white shadow-sm">
        <svg viewBox="0 0 15 15" className="h-[15px] w-[15px]" fill="none" stroke="#666" strokeWidth="2">
          <path d="M1 5V1h4M10 1h4v4M14 10v4h-4M5 14H1v-4" />
        </svg>
      </div>
      <div className="absolute top-[283px] right-[10px] h-[28px] w-[28px] rounded-[2px] bg-white shadow-sm">
        <svg viewBox="0 0 28 28" className="h-7 w-7">
          <path d="M8.500 19l1.500-6q1-2.500 4-2.500t4 2.500l1.500 6-2 .5-.5 8.500h-6l-.5-8.500z" fill="#f9b31c" stroke="#e29a0e" strokeWidth=".6" />
          <path d="M11.500 11l2.500 4 2.500-4z" fill="#d9720a" />
          <circle cx="14" cy="7" r="3.700" fill="#f9b31c" stroke="#e29a0e" strokeWidth=".6" />
        </svg>
      </div>
    </div>
  );
}

function Content() {
  return (
    <main className="flex min-w-0 flex-1 flex-col bg-white px-[15px] pt-2 font-['Open_Sans',sans-serif]">
      <div className="flex h-12 shrink-0 items-center rounded bg-[#e9ecef] px-4 pt-[2px] text-[15.500px] tracking-[-0.300px]">
        <span className="text-[#007bff]">Dashboard</span>
        <span className="px-2 text-[#868e96]">/</span>
        <span className="tracking-[-0.180px] text-[#868e96]">My Dashboard</span>
      </div>
      <div className="mt-4 grid shrink-0 grid-cols-4 gap-[30px]">
        <StatCard title="26 New Messages!" icon="comments" className="bg-[#007bff]" />
        <StatCard title="11 New Tasks!" icon="list" className="bg-[#ffc107]" />
        <StatCard title="123 New Orders!" icon="cart" className="bg-[#28a745]" />
        <StatCard title="13 New Tickets!" icon="ring" className="bg-[#dc3545]" />
      </div>
      <section className="mt-4 h-[420px] shrink-0 rounded border border-[#dfdfdf]">
        <div className="flex h-[49px] items-center border-b border-[#dfdfdf] bg-[#f7f7f7] pl-5 text-[15.500px] text-[#292b2c]">
          <FoldedMap className="h-[17px] w-[19px]" />
          <span className="ml-1 pt-[2px] tracking-[-0.250px]">Drivers on Route</span>
        </div>
        <div className="px-5 pt-5">
          <MapPanel />
        </div>
      </section>
    </main>
  );
}

function Scrollbar() {
  return (
    <div className="flex w-[17px] shrink-0 flex-col items-center bg-[#f1f1f1]">
      <svg viewBox="0 0 17 17" className="h-[17px] w-[17px]">
        <path d="M5 11l3.500-4 3.500 4z" fill="#a3a3a3" />
      </svg>
      <div className="h-[273px] w-[13px] bg-[#c1c1c1]" />
    </div>
  );
}

export default function App() {
  return (
    <div className="relative flex h-[699px] w-[1366px] flex-col overflow-hidden bg-white">
      <TabStrip />
      <Toolbar />
      <div className="flex min-h-0 flex-1">
        <div className="flex min-w-0 flex-1 flex-col overflow-hidden">
          <Navbar />
          <div className="flex min-h-0 flex-1 overflow-hidden">
            <Sidebar />
            <Content />
          </div>
        </div>
        <Scrollbar />
      </div>
      <FindBar />
      <div className="absolute top-[307px] left-[607px] flex h-[21px] w-[172px] items-center bg-[#0090ff]/[0.08] font-['Open_Sans',sans-serif] text-[12px] tracking-[-0.150px] text-[#a89c90]/40">
        <span className="flex h-[21px] w-[21px] items-center justify-center bg-[#0078d7]/[0.03]">
          <span className="h-[6px] w-[6px] rounded-full bg-[#aaa]/40" />
        </span>
        <span className="ml-[11px]">Window Snip</span>
      </div>
    </div>
  );
}
